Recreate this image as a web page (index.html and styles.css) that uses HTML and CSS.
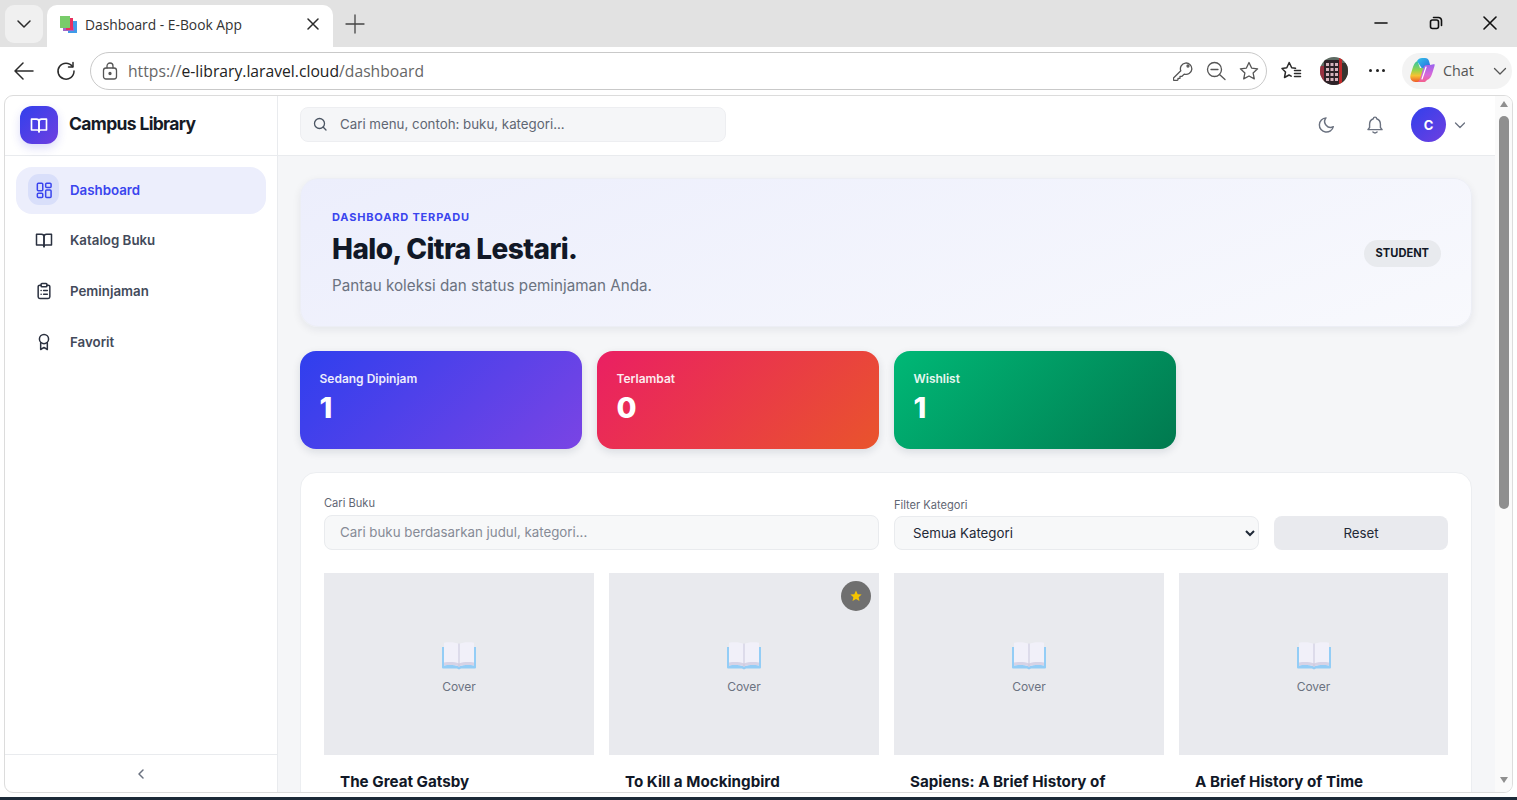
FILE: index.html
```html
<!DOCTYPE html>
<html lang="id">
<head>
    <meta charset="UTF-8">
    <meta name="viewport" content="width=device-width, initial-scale=1.0">
    <title>Dashboard - E-Book App</title>
    <link rel="stylesheet" href="styles.css">
</head>
<body>
    <!-- browser chrome -->
    <div class="tabstrip">
        <div class="tab-list">
            <svg width="16" height="16" viewBox="0 0 16 16" class="ico-dark"><path d="M2 5l6 6 6-6"/></svg>
        </div>
        <div class="tab">
            <svg class="favicon" width="17" height="17" viewBox="0 0 17 17">
                <rect x="8" y="5" width="9" height="12" fill="#3f9be8"/>
                <rect x="3" y="11" width="11" height="4" fill="#a066c8"/>
                <rect x="6" y="2" width="7" height="12" fill="#e8305f"/>
                <rect x="0" y="0" width="10" height="12" fill="#78cc6a"/>
            </svg>
            <span class="tab-title">Dashboard - E-Book App</span>
            <svg class="tab-close ico-dark" width="12" height="12" viewBox="0 0 12 12"><path d="M1 1l10 10M11 1L1 11"/></svg>
        </div>
        <svg class="new-tab" width="20" height="20" viewBox="0 0 20 20"><path d="M10 1v18M1 10h18"/></svg>
        <div class="win-controls">
            <svg width="14" height="14" viewBox="0 0 14 14"><path d="M1 7h12"/></svg>
            <svg width="14" height="14" viewBox="0 0 14 14"><rect x="1.500" y="4" width="8" height="8.500" rx="2"/><path d="M4.500 1.500h5a3 3 0 0 1 3 3v5"/></svg>
            <svg width="14" height="14" viewBox="0 0 14 14"><path d="M1 1l12 12M13 1L1 13"/></svg>
        </div>
    </div>
    <div class="toolbar">
        <svg class="tb-back ico-dark" width="20" height="20" viewBox="0 0 20 20"><path d="M19 10H1M9 2l-8 8 8 8"/></svg>
        <svg class="tb-reload ico-dark" width="20" height="20" viewBox="0 0 20 20"><path d="M16.500 5.500A8 8 0 1 0 18 10"/><path d="M17 1.500v4.500h-4.500"/></svg>
        <div class="omnibox">
            <svg class="ico-grey" width="16" height="18" viewBox="0 0 16 18"><rect x="1.500" y="6" width="13" height="11" rx="2.500"/><path d="M5 6V4a3 3 0 0 1 6 0v2"/><circle cx="8" cy="11.500" r="1" fill="#555"/></svg>
            <div class="url"><span class="url-dim">https://</span>e-library.laravel.cloud<span class="url-dim">/dashboard</span></div>
            <div class="omni-icons">
                <svg class="ico-grey" width="20" height="20" viewBox="0 0 20 20"><path d="M7.800 9.800a5.700 5.700 0 1 1 3.400 3.300L9 15.300H7v2H5v1.500l-1 .7H1.500a1 1 0 0 1-1-1V17z"/><circle cx="15" cy="5" r="1"/></svg>
                <svg class="ico-grey" width="20" height="20" viewBox="0 0 20 20"><circle cx="8.500" cy="8.500" r="7"/><path d="M5 8.500h7M13.500 13.500l5.500 5"/></svg>
                <svg class="ico-grey" width="20" height="20" viewBox="0 0 20 20"><path d="M10 1.500l2.600 5.600 6 .7-4.500 4.100 1.200 6L10 15l-5.300 2.900 1.200-6L1.400 7.800l6-.7z"/></svg>
            </div>
        </div>
        <svg class="tb-fav ico-dark" width="21" height="20" viewBox="0 0 21 20"><path d="M14.500 7.300l-3.800-.6L8.200 1.500 5.800 6.700 1 7.500l3.500 3.500-1 5.500L8 14l2.200 1.200"/><path d="M13.500 9.500h6M13.500 12.500h6M13.500 15.500h6"/></svg>
        <svg class="tb-avatar" width="28" height="28" viewBox="0 0 28 28">
            <defs><clipPath id="avClip"><circle cx="14" cy="14" r="14"/></clipPath></defs>
            <g clip-path="url(#avClip)">
                <rect width="28" height="28" fill="#5d6a62"/>
                <rect x="0" y="9" width="6" height="19" fill="#9a3040"/>
                <rect x="4" y="3" width="15" height="25" fill="#2e2228"/>
                <rect x="19" y="1" width="3" height="27" fill="#c02a2a"/>
                <rect x="22" y="6" width="6" height="22" fill="#36352f"/>
                <path d="M6 6h3v3H6zM10.500 6h3v3h-3zM15 6h3v3h-3zM6 11h3v3H6zM10.500 11h3v3h-3zM15 11h3v3h-3zM6 16h3v3H6zM10.500 16h3v3h-3zM15 16h3v3h-3zM6 21h3v3H6zM10.500 21h3v3h-3zM15 21h3v3h-3z" fill="#d6b3bd"/>
            </g>
        </svg>
        <div class="tb-more"><i></i><i></i><i></i></div>
        <div class="chat-pill">
            <svg width="27" height="27" viewBox="0 0 27 27">
                <defs>
                    <linearGradient id="cpA" x1="0" y1="0" x2="1" y2="1"><stop offset="0" stop-color="#35c4e8"/><stop offset="1" stop-color="#2460e0"/></linearGradient>
                    <linearGradient id="cpB" x1="0.500" y1="0" x2="0.500" y2="1"><stop offset="0" stop-color="#2fc4a8"/><stop offset=".45" stop-color="#9bd44a"/><stop offset=".7" stop-color="#f7c232"/><stop offset="1" stop-color="#ee5a2a"/></linearGradient>
                    <linearGradient id="cpC" x1="0.500" y1="0" x2="0.500" y2="1"><stop offset="0" stop-color="#9a62ee"/><stop offset=".6" stop-color="#d868d8"/><stop offset="1" stop-color="#f4608c"/></linearGradient>
                </defs>
                <path d="M8 4c1-2 3-3 5-3h3c2 0 3.500 1 4 3l2.500 9H14z" fill="url(#cpA)"/>
                <path d="M8.500 4C6 5 4.500 8 3.500 11.500l-2 6.500C.5 22 3 25 6.500 25H10c2 0 3.500-1 4-3l3.500-11H11z" fill="url(#cpB)"/>
                <path d="M18 23c3-1 4.500-4 5.500-7.500l2-6.500C26.500 6 24 8 21 8h-3.500c-1.500 0-2.500 1-3 2.500L11 22c-.5 2-2 3-3 3h6c2 .3 3-.7 4-2z" fill="url(#cpC)"/>
                <path d="M17 10l-4 12" stroke="#fff" stroke-width="1.200"/>
            </svg>
            <span class="chat-label">Chat</span>
            <svg class="chat-caret ico-grey" width="14" height="14" viewBox="0 0 14 14"><path d="M1.500 4.500L7 10l5.500-5.500"/></svg>
        </div>
    </div>

    <!-- the page itself -->
    <div class="frame">
        <aside class="sidebar">
            <div class="brand">
                <div class="brand-logo">
                    <svg width="20" height="20" viewBox="0 0 24 24"><use href="#i-book"/></svg>
                </div>
                <span class="brand-name">Campus Library</span>
            </div>
            <nav class="nav">
                <a class="nav-item active">
                    <span class="nav-ico">
                        <svg width="20" height="20" viewBox="0 0 24 24"><rect x="4" y="4" width="6.500" height="9" rx="1.200"/><rect x="14" y="4" width="6.500" height="5" rx="1.200"/><rect x="4" y="16" width="6.500" height="5" rx="1.200"/><rect x="14" y="12" width="6.500" height="9" rx="1.200"/></svg>
                    </span>
                    Dashboard
                </a>
                <a class="nav-item">
                    <span class="nav-ico"><svg width="20" height="20" viewBox="0 0 24 24"><use href="#i-book"/></svg></span>
                    Katalog Buku
                </a>
                <a class="nav-item">
                    <span class="nav-ico">
                        <svg width="20" height="20" viewBox="0 0 24 24"><path d="M8.500 5H7a2 2 0 0 0-2 2v12a2 2 0 0 0 2 2h10a2 2 0 0 0 2-2V7a2 2 0 0 0-2-2h-1.500"/><rect x="8.500" y="3" width="7" height="4" rx="1"/><path d="M8.500 11.500h.1M11.500 11.500H16M8.500 16h.1M11.500 16H16"/></svg>
                    </span>
                    Peminjaman
                </a>
                <a class="nav-item">
                    <span class="nav-ico">
                        <svg width="20" height="20" viewBox="0 0 24 24"><circle cx="12" cy="8.500" r="5.500"/><path d="M8 13v8l4-2.500 4 2.500v-8"/></svg>
                    </span>
                    Favorit
                </a>
            </nav>
            <div class="side-foot">
                <svg width="12" height="12" viewBox="0 0 12 12"><path d="M8 2L4 6l4 4"/></svg>
            </div>
        </aside>

        <div class="main">
            <header class="topbar">
                <div class="top-search">
                    <svg width="16" height="16" viewBox="0 0 16 16"><circle cx="7.500" cy="7.500" r="5"/><path d="M11.300 11.300L14 14"/></svg>
                    <span>Cari menu, contoh: buku, kategori...</span>
                </div>
                <div class="top-actions">
                    <svg class="top-ico" width="20" height="20" viewBox="0 0 24 24"><path d="M12 3.500a8.500 8.500 0 1 0 8.800 10.500A7 7 0 0 1 12 3.500z"/></svg>
                    <svg class="top-ico" width="20" height="20" viewBox="0 0 24 24"><path d="M10 4.500a2 2 0 0 1 4 0A7 7 0 0 1 18.500 11v4l2 2.500h-17l2-2.500v-4A7 7 0 0 1 10 4.500zM9.500 20.500c1.500 1.300 3.500 1.300 5 0"/></svg>
                    <div class="avatar">C</div>
                    <svg class="top-caret" width="12" height="12" viewBox="0 0 12 12"><path d="M1.500 4L6 8.500 10.500 4"/></svg>
                </div>
            </header>

            <main class="content">
                <section class="hero">
                    <div>
                        <div class="kicker">DASHBOARD TERPADU</div>
                        <h1>Halo, Citra Lestari.</h1>
                        <p>Pantau koleksi dan status peminjaman Anda.</p>
                    </div>
                    <span class="role">STUDENT</span>
                </section>

                <section class="stats">
                    <div class="stat stat-blue"><div class="stat-label">Sedang Dipinjam</div><div class="stat-num">1</div></div>
                    <div class="stat stat-red"><div class="stat-label">Terlambat</div><div class="stat-num">0</div></div>
                    <div class="stat stat-green"><div class="stat-label">Wishlist</div><div class="stat-num">1</div></div>
                </section>

                <section class="panel">
                    <div class="filters">
                        <div class="field">
                            <label for="q">Cari Buku</label>
                            <input id="q" type="text" placeholder="Cari buku berdasarkan judul, kategori...">
                        </div>
                        <div class="field field-select">
                            <label for="cat">Filter Kategori</label>
                            <select id="cat"><option>Semua Kategori</option></select>
                        </div>
                        <button class="reset">Reset</button>
                    </div>

                    <div class="books">
                        <article class="book">
                            <div class="cover">
                                <svg width="36" height="28" viewBox="0 0 36 28"><use href="#i-cover"/></svg>
                                <span>Cover</span>
                            </div>
                            <h3>The Great Gatsby</h3>
                        </article>
                        <article class="book">
                            <div class="cover">
                                <div class="fav-badge">
                                    <svg width="12" height="12" viewBox="0 0 20 20"><path d="M10 1l2.800 6 6.500.7-4.900 4.400 1.400 6.400L10 15.200l-5.800 3.300 1.400-6.400L.7 7.700 7.200 7z"/></svg>
                                </div>
                                <svg width="36" height="28" viewBox="0 0 36 28"><use href="#i-cover"/></svg>
                                <span>Cover</span>
                            </div>
                            <h3>To Kill a Mockingbird</h3>
                        </article>
                        <article class="book">
                            <div class="cover">
                                <svg width="36" height="28" viewBox="0 0 36 28"><use href="#i-cover"/></svg>
                                <span>Cover</span>
                            </div>
                            <h3>Sapiens: A Brief History of</h3>
                        </article>
                        <article class="book">
                            <div class="cover">
                                <svg width="36" height="28" viewBox="0 0 36 28"><use href="#i-cover"/></svg>
                                <span>Cover</span>
                            </div>
                            <h3>A Brief History of Time</h3>
                        </article>
                    </div>
                </section>
            </main>
        </div>

        <div class="scrollbar">
            <span class="arrow-up"></span>
            <div class="thumb-track"><div class="thumb"></div></div>
            <span class="arrow-down"></span>
        </div>
    </div>
    <div class="taskbar"></div>

    <!-- shared icons -->
    <svg class="defs" width="0" height="0">
        <symbol id="i-book" viewBox="0 0 24 24">
            <path d="M3 5h6a3 3 0 0 1 3 3v12a2 2 0 0 0-2-2H3z"/>
            <path d="M21 5h-6a3 3 0 0 0-3 3v12a2 2 0 0 1 2-2h7z"/>
        </symbol>
        <symbol id="i-cover" viewBox="0 0 36 28">
            <path d="M1 5h34v20.500a1 1 0 0 1-1 1H20l-2 1-2-1H2a1 1 0 0 1-1-1z" fill="#93cdf6"/>
            <path d="M3 .7c5-.7 11-.7 15 1.300 4-2 10-2 15-1.300V23.500c-5-.7-11-.7-15 1C14 22.800 8 22.800 3 23.500z" fill="#f1f0f9"/>
            <path d="M3 20.500c5-.7 11-.7 15 1 4-1.700 10-1.700 15-1v3c-5-.7-11-.7-15 1C14 22.800 8 22.800 3 23.500z" fill="#d6d3e6"/>
            <path d="M18 2v22.500" stroke="#c9c7dc" stroke-width="1" fill="none"/>
        </symbol>
    </svg>
</body>
</html>
```

FILE: styles.css
```css
* {
    box-sizing: border-box;
}

body {
    margin: 0;
    height: 800px;
    overflow: hidden;
    background-color: #fff;
    font-family: "Inter", "Liberation Sans", sans-serif;
    color: #111827;
}

svg {
    display: block;
    flex: none;
    fill: none;
    stroke-linecap: round;
    stroke-linejoin: round;
}

.defs {
    position: absolute;
}

.ico-dark {
    stroke: #2b2b2b;
    stroke-width: 1.5;
}

.ico-grey {
    stroke: #555;
    stroke-width: 1.3;
}

/* browser chrome */
.tabstrip {
    height: 47px;
    padding: 5px 0 0 5px;
    display: flex;
    align-items: flex-start;
    background-color: #e2e2e2;
}

.tab-list {
    width: 38px;
    height: 38px;
    border-radius: 9px;
    background-color: #f0f0f0;
    display: flex;
    align-items: center;
    justify-content: center;
}

.tab {
    width: 286px;
    height: 42px;
    margin-left: 4px;
    padding: 0 14px 4px 13px;
    border-radius: 10px 10px 0 0;
    background-color: #fff;
    display: flex;
    align-items: center;
}

.favicon {
    margin-right: 8px;
}

.tab-title {
    flex: 1;
    font: 13.800px "Open Sans", sans-serif;
    color: #333;
}

.new-tab {
    margin: 9px 0 0 12px;
    stroke: #444;
    stroke-width: 1.3;
}

.win-controls {
    margin: 11px 20px 0 auto;
    display: flex;
    gap: 40.500px;
}

.win-controls svg {
    stroke: #111;
    stroke-width: 1.6;
}

.toolbar {
    height: 47px;
    padding: 0 5px 0 14px;
    display: flex;
    align-items: center;
    background-color: #fff;
}

.tb-reload {
    margin-left: 22px;
}

.omnibox {
    width: 1177px;
    height: 38px;
    margin-left: 14px;
    padding: 0 7px 0 11px;
    border: 1px solid #c9c9c9;
    border-radius: 19px;
    display: flex;
    align-items: center;
}

.url {
    flex: 1;
    margin-left: 10px;
    font: 15.700px "Open Sans", sans-serif;
    color: #222;
}

.url-dim {
    color: #666;
}

.omni-icons {
    display: flex;
    gap: 13px;
}

.tb-fav {
    margin-left: 14px;
}

.tb-avatar {
    margin-left: 18px;
}

.tb-more {
    margin-left: 21px;
    width: 16px;
    display: flex;
    justify-content: space-between;
}

.tb-more i {
    width: 3px;
    height: 3px;
    border-radius: 50%;
    background-color: #222;
}

.chat-pill {
    width: 110px;
    height: 36px;
    margin-left: 17px;
    padding-left: 7px;
    border-radius: 18px;
    background-color: #f3f3f3;
    display: flex;
    align-items: center;
}

.chat-label {
    margin-left: 7px;
    font: 14.300px "Open Sans", sans-serif;
    color: #555;
}

.chat-caret {
    margin-left: 19px;
}

/* page frame */
.frame {
    width: 1509px;
    height: 698px;
    margin: 1px 0 0 4px;
    border: 1px solid #dcdcdc;
    border-radius: 9px;
    overflow: hidden;
    display: flex;
}

.taskbar {
    height: 4px;
    margin-top: 4px;
    background-color: #1c2a38;
}

/* sidebar */
.sidebar {
    width: 273px;
    flex: none;
    border-right: 1px solid #e9ebee;
    display: flex;
    flex-direction: column;
}

.brand {
    height: 60px;
    padding: 0 15px 2px;
    border-bottom: 1px solid #e9ebee;
    display: flex;
    align-items: center;
    gap: 11px;
}

.brand-logo {
    width: 38px;
    height: 38px;
    border-radius: 12px;
    background: linear-gradient(135deg, #3140ec, #6f3fe0);
    box-shadow: 0 4px 10px rgba(60, 60, 220, 0.18);
    display: flex;
    align-items: center;
    justify-content: center;
}

.brand-logo svg {
    stroke: #fff;
    stroke-width: 2;
}

.brand-name {
    margin-bottom: 2px;
    font-size: 17.500px;
    font-weight: 700;
    letter-spacing: -0.65px;
    color: #161b26;
}

.nav {
    flex: 1;
    padding: 11px 11px;
    display: flex;
    flex-direction: column;
    gap: 3.750px;
}

.nav-item {
    height: 47px;
    padding: 0 12px 2px;
    border-radius: 16px;
    display: flex;
    align-items: center;
    gap: 11px;
    font-size: 13.300px;
    font-weight: 600;
    color: #434a5a;
}

.nav-item svg {
    stroke: #2b3140;
    stroke-width: 1.8;
}

.nav-ico {
    width: 31px;
    height: 31px;
    border-radius: 11px;
    display: flex;
    align-items: center;
    justify-content: center;
}

.nav-item.active {
    background-color: #eceefc;
    color: #3a45ee;
}

.nav-item.active .nav-ico {
    background-color: #d9dffa;
}

.nav-item.active svg {
    stroke: #3a45ee;
}

.side-foot {
    height: 38px;
    border-top: 1px solid #e9ebee;
    display: flex;
    align-items: center;
    justify-content: center;
}

.side-foot svg {
    stroke: #6b7280;
    stroke-width: 1.5;
}

/* main column */
.main {
    flex: 1;
    min-width: 0;
    background-color: #f5f6f8;
}

.topbar {
    height: 60px;
    padding: 0 29px 2px 22px;
    border-bottom: 1px solid #e9ebee;
    background-color: #fff;
    display: flex;
    align-items: center;
    justify-content: space-between;
}

.top-search {
    width: 426px;
    height: 35px;
    padding: 0 11px 2px;
    border: 1px solid #edeef1;
    border-radius: 8px;
    background-color: #f5f6f8;
    display: flex;
    align-items: center;
    gap: 12px;
    font-size: 13.300px;
    color: #5f6673;
}

.top-search svg {
    stroke: #4b5563;
    stroke-width: 1.300;
}

.top-actions {
    display: flex;
    align-items: center;
}

.top-ico {
    margin-right: 30px;
    stroke: #6b7280;
    stroke-width: 1.700;
}

.top-ico:first-child {
    margin-right: 29px;
}

.avatar {
    width: 35px;
    height: 35px;
    margin-left: -4px;
    border-radius: 50%;
    background: linear-gradient(135deg, #3140ec, #6f3fe0);
    color: #fff;
    font-size: 13px;
    font-weight: 700;
    display: flex;
    align-items: center;
    justify-content: center;
}

.top-caret {
    margin-left: 8px;
    stroke: #6b7280;
    stroke-width: 1.300;
}

.content {
    padding: 22px 23px 0 22px;
}

.hero {
    height: 149px;
    padding: 0 30px 0 31px;
    border: 1px solid #eceef5;
    border-radius: 18px;
    background: linear-gradient(160deg, #eceefc, #f8f9fd);
    box-shadow: 0 3px 8px rgba(20, 30, 60, 0.07);
    display: flex;
    align-items: center;
    justify-content: space-between;
}

.kicker {
    font-size: 11px;
    font-weight: 700;
    letter-spacing: 0.82px;
    color: #3a45ee;
}

.hero h1 {
    margin: 7px 0 9px;
    font-size: 28px;
    line-height: 36px;
    font-weight: 800;
    letter-spacing: -0.55px;
    color: #111827;
}

.hero p {
    margin: 0;
    font-size: 15.200px;
    color: #6b7280;
}

.role {
    margin-top: 2px;
    padding: 7px 12px;
    border-radius: 14px;
    background-color: #e8eaee;
    font-size: 11.100px;
    font-weight: 700;
    line-height: 13px;
    color: #111827;
}

.stats {
    margin-top: 24px;
    display: grid;
    grid-template-columns: repeat(3, 282px);
    gap: 15px;
}

.stat {
    height: 98px;
    padding: 20px 19.500px;
    border-radius: 16px;
    box-shadow: 0 3px 8px rgba(20, 30, 60, 0.12);
    color: #fff;
}

.stat-blue {
    background: linear-gradient(135deg, #2f3fee, #7a44e4);
}

.stat-red {
    background: linear-gradient(135deg, #ea1f63, #e9542c);
}

.stat-green {
    background: linear-gradient(135deg, #00b876, #01794f);
}

.stat-label {
    font-size: 12px;
    font-weight: 600;
    line-height: 16px;
    opacity: 0.9;
}

.stat-num {
    margin-top: 3px;
    font-size: 29px;
    font-weight: 800;
    line-height: 36px;
}

.panel {
    margin-top: 23px;
    padding: 23px 23px;
    border: 1px solid #eceef1;
    border-radius: 16px;
    background-color: #fff;
}

.filters {
    display: grid;
    grid-template-columns: 555px 365px 1fr;
    gap: 15px;
    align-items: end;
}

.field label {
    display: block;
    margin-bottom: 5px;
    font-size: 11.100px;
    line-height: 14px;
    color: #5f6673;
}

.field-select label {
    margin-bottom: 4px;
}

.field input,
.field select {
    display: block;
    width: 100%;
    border: 1px solid #e9ebee;
    border-radius: 8px;
    background-color: #f7f8f9;
    font-family: inherit;
    font-size: 13.300px;
}

.field input {
    height: 35px;
    padding: 0 15px 2px;
}

.field input::placeholder {
    color: #868b96;
}

.field select {
    height: 34px;
    padding: 0 14px;
    color: #1f2937;
}

.reset {
    height: 34px;
    border: 0;
    border-radius: 8px;
    background-color: #e9eaee;
    font-family: inherit;
    font-size: 13.300px;
    color: #1f2937;
}

.books {
    margin-top: 23px;
    display: grid;
    grid-template-columns: 270px 270px 270px 1fr;
    gap: 15px;
}

.cover {
    position: relative;
    height: 182px;
    padding-top: 69px;
    background-color: #e9eaee;
    display: flex;
    flex-direction: column;
    align-items: center;
    gap: 9px;
    font-size: 12px;
    color: #6b7280;
}

.fav-badge {
    position: absolute;
    top: 8px;
    right: 8px;
    width: 30px;
    height: 30px;
    border-radius: 50%;
    background-color: #6f6f6f;
    display: flex;
    align-items: center;
    justify-content: center;
}

.fav-badge svg {
    fill: #f5c400;
}

.book h3 {
    margin: 17px 16px 0;
    font-size: 15.200px;
    font-weight: 700;
    line-height: 20px;
    color: #111827;
}

/* scrollbar of the page */
.scrollbar {
    width: 17px;
    flex: none;
    padding: 5px 3px 9px 4px;
    background-color: #fafafa;
    display: flex;
    flex-direction: column;
    align-items: center;
}

.arrow-up,
.arrow-down {
    flex: none;
    width: 0;
    height: 0;
    border-left: 4.500px solid transparent;
    border-right: 4.500px solid transparent;
}

.arrow-up {
    border-bottom: 6px solid #8f8f8f;
}

.arrow-down {
    border-top: 6px solid #8f8f8f;
}

.thumb-track {
    flex: 1;
    width: 100%;
    padding-top: 9px;
}

.thumb {
    width: 100%;
    height: 393px;
    border-radius: 5px;
    background-color: #8f8f8f;
}
```
